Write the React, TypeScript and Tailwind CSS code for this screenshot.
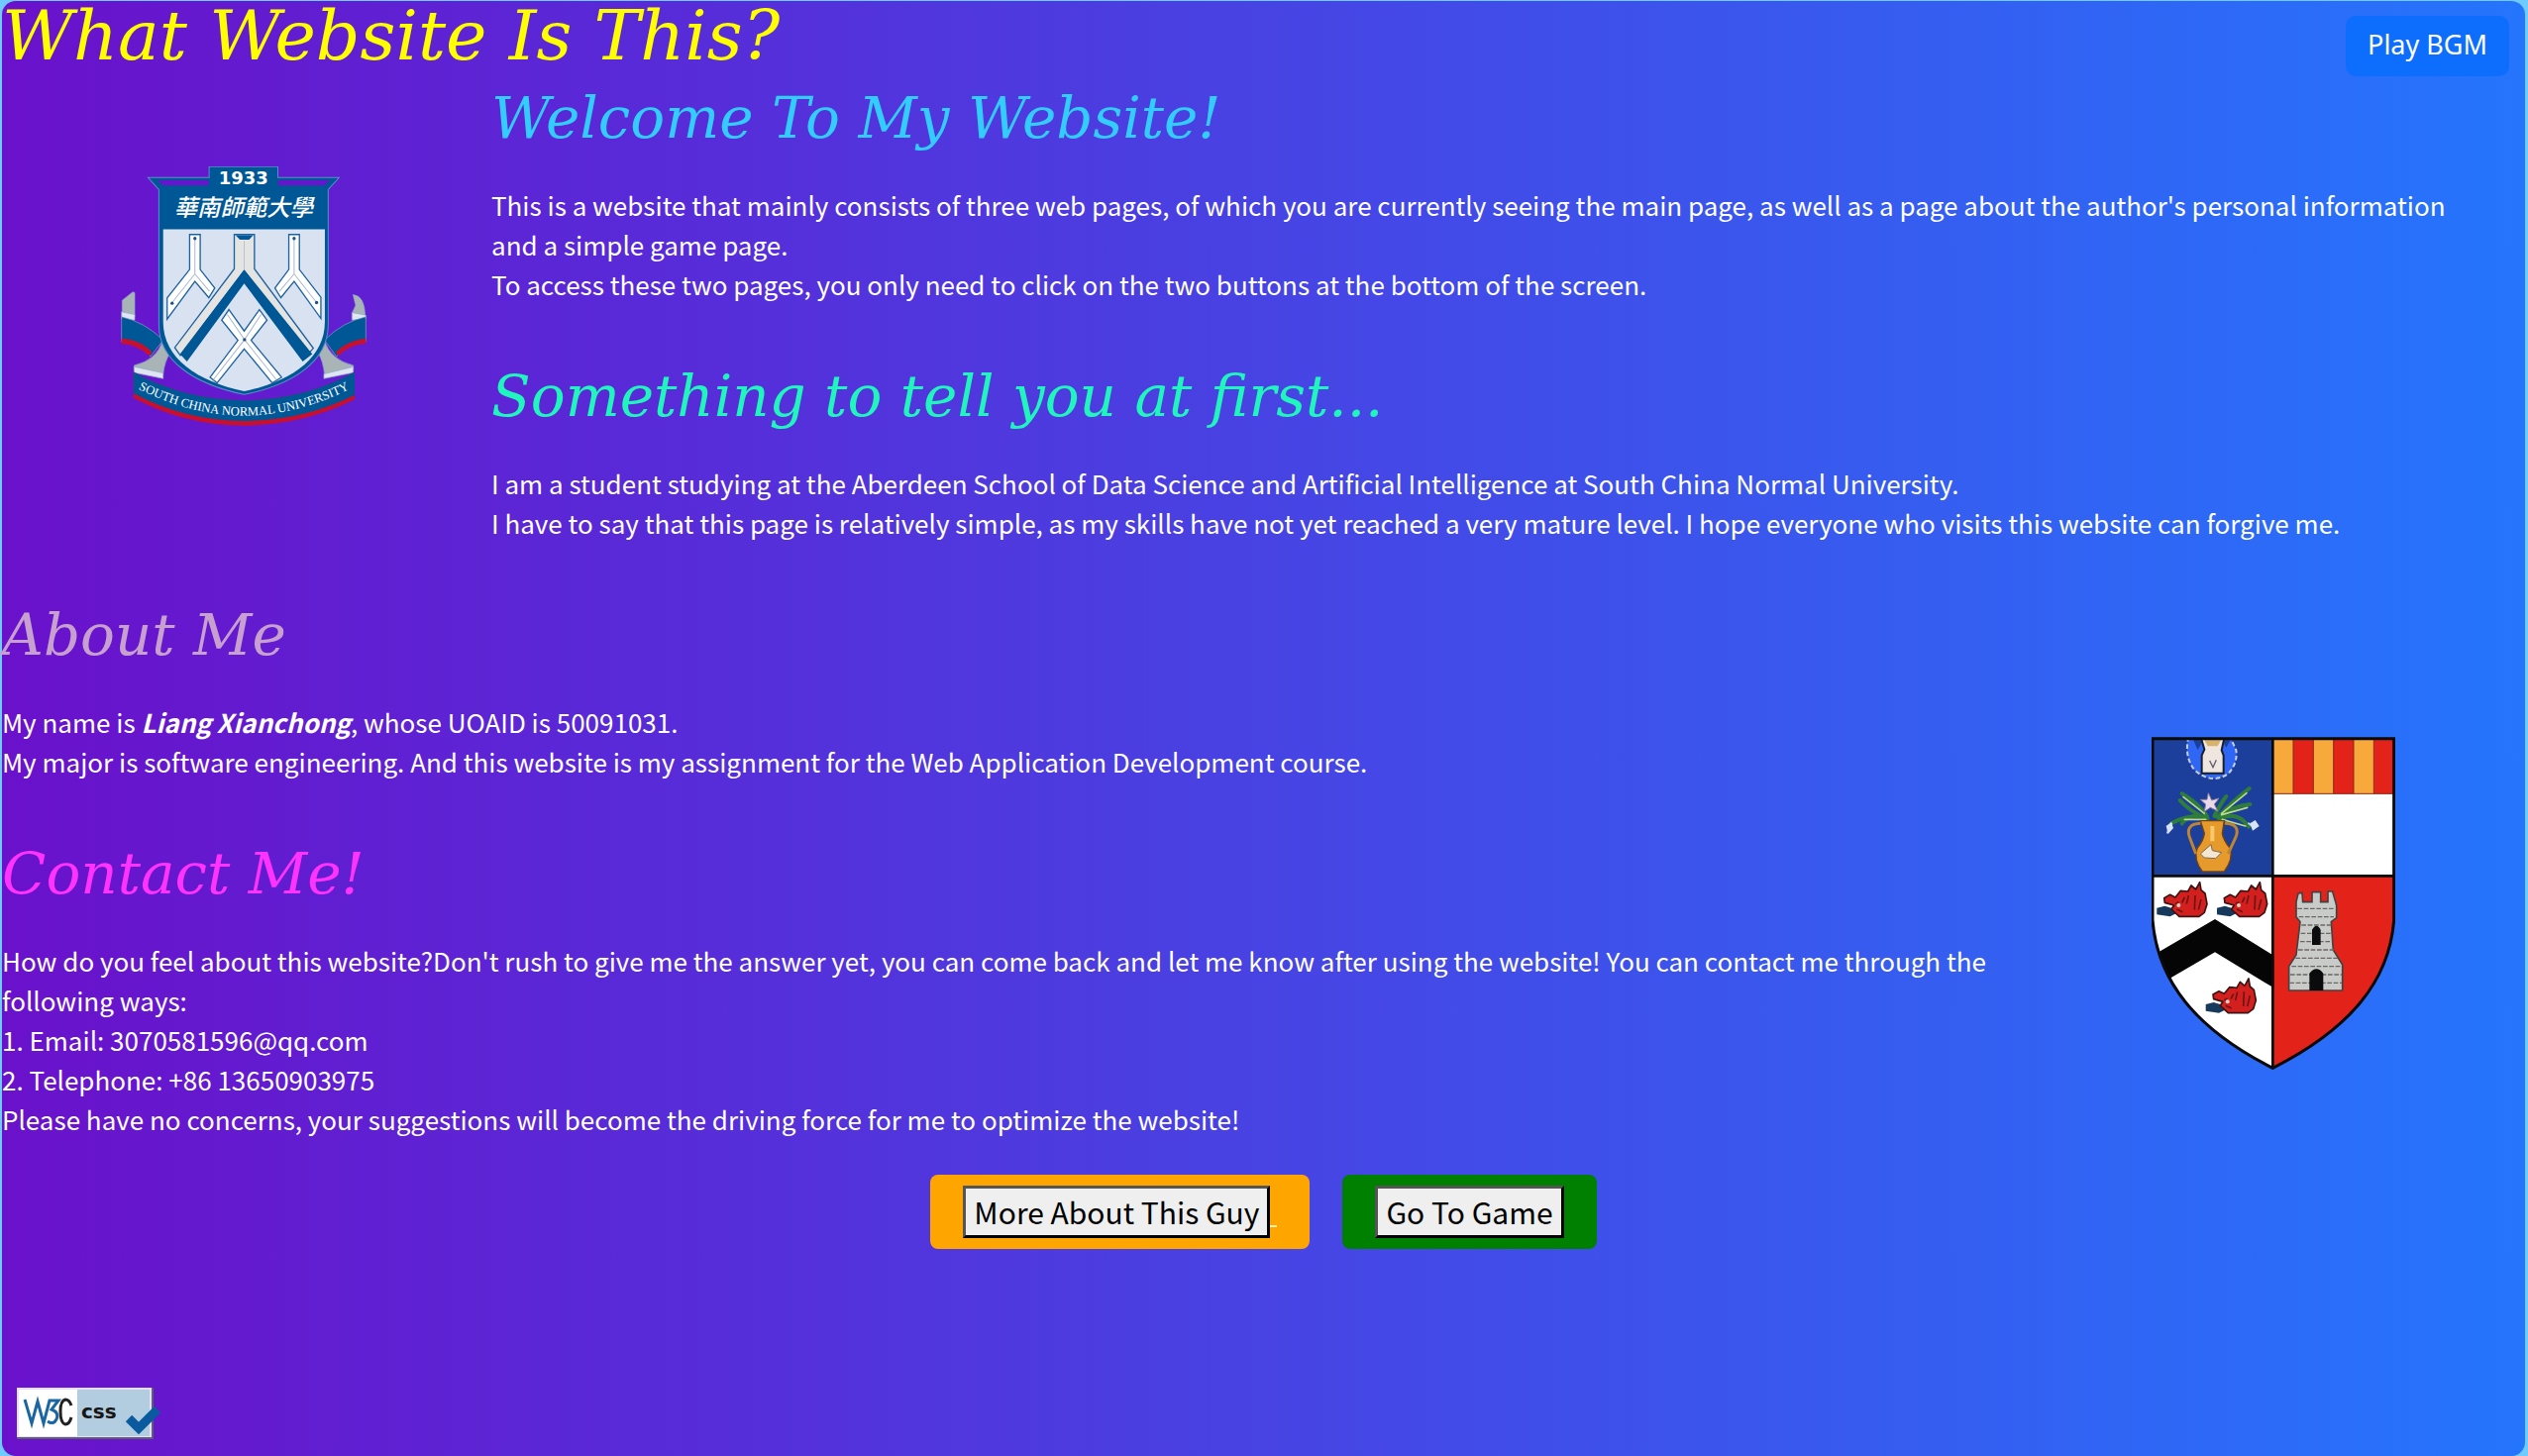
import React from "react";

function ScnuCrest() {
  return (
    <svg viewBox="0 0 743 785" className="w-[248px]" role="img" aria-label="South China Normal University crest">
      <defs>
        <path id="motto" d="M42 668 Q205 752 372 754 Q540 752 702 668" />
      </defs>
      <g stroke="#8aa4c8" strokeWidth="2">
        <path d="M4 405 L36 380 L42 382 L42 455 L4 442Z" fill="#a9b4b6" />
        <path d="M2 440 L42 448 V465 L2 462Z" fill="#dfe6f2" />
        <path d="M2 455 Q70 470 128 525 L90 575 Q50 530 2 530Z" fill="#005796" />
        <path d="M2 520 Q60 525 95 562 L86 573 Q50 538 2 536Z" fill="#c8102e" stroke="none" />
        <path d="M40 602 Q110 585 126 527 L150 562 Q132 590 128 628 L40 615Z" fill="#a9b4b6" />
        <path d="M40 606 L128 625 V642 L40 624Z" fill="#dfe6f2" />
        <path d="M702 388 Q738 390 739 455 L700 442 L710 420Z" fill="#a9b4b6" />
        <path d="M699 442 L741 450 L741 462 L699 465Z" fill="#dfe6f2" />
        <path d="M741 455 Q672 470 616 525 L652 575 Q692 535 741 530Z" fill="#005796" />
        <path d="M741 520 Q682 528 650 562 L658 573 Q692 538 741 536Z" fill="#c8102e" stroke="none" />
        <path d="M703 602 Q634 585 616 527 L596 562 Q612 590 616 630 L703 615Z" fill="#a9b4b6" />
        <path d="M703 606 L614 628 V642 L703 624Z" fill="#dfe6f2" />
      </g>
      <path d="M38 622 Q190 706 372 708 Q555 706 707 622 V705 Q555 782 372 784 Q190 782 38 700Z" fill="#c8102e" />
      <path d="M38 622 Q190 706 372 708 Q555 706 707 622 V691 Q555 768 372 770 Q190 768 38 686Z" fill="#005796" />
      <path d="M82 34 H267 V1 H475 V34 H660 L627 70 V480 C627 590 520 660 373 690 C226 660 115 590 115 480 V70Z" fill="#005796" stroke="#5b8fc8" strokeWidth="3" />
      <path d="M112 42 H266 V58 H126Z M632 42 H476 V58 H616Z" fill="#6516cc" />
      <path d="M128 190 H617 V470 C617 580 515 650 373 680 C231 650 128 580 128 470Z" fill="#d9e2f1" />
      <g stroke="#1f62a0" strokeWidth="4" fill="#e4e4e2">
        <path d="M343 206 H404 V310 L582 550 L566 568 L373 316 L180 572 L163 548 L343 310Z" />
      </g>
      <path d="M347 208 H400 L388 222 H360Z" fill="#005796" />
      <path d="M373 225 V316" stroke="#b8c4d6" strokeWidth="3" />
      <path d="M373 312 L579 568 L550 590 L373 354 L200 590 L179 568Z" fill="#005796" />
      <g stroke="#1f62a0" strokeWidth="4" fill="#ffffff">
        <path d="M208 206 H240 V312 L284 368 L266 397 L224 348 L140 462 V398 L208 312Z" />
        <path d="M508 206 H540 V312 L605 396 V460 L524 348 L484 397 L466 368 L508 312Z" />
        <path d="M327 433 L373 498 L419 433 L442 465 L394 526 L486 638 L458 655 L373 552 L291 655 L270 638 L354 526 L305 465Z" />
      </g>
      <path d="M224 218 V325 M224 325 L155 412 M224 325 L268 378 M524 218 V325 M524 325 L592 412 M524 325 L480 378 M322 448 L374 524 L470 645 M424 448 L374 524 L280 645" fill="none" stroke="#a9b8d0" strokeWidth="3" />
      <g fill="#1f4f8a">
        <circle cx="224" cy="218" r="5" /><circle cx="524" cy="218" r="5" /><circle cx="155" cy="414" r="5" /><circle cx="592" cy="412" r="5" /><circle cx="374" cy="524" r="5" />
      </g>
      <text x="371" y="53" textAnchor="middle" fontSize="54" fontWeight="700" fill="#fff" fontFamily="DejaVu Sans">1933</text>
      <text x="371" y="151" textAnchor="middle" fontSize="70" fontWeight="500" fill="#fff" fontStyle="italic" fontFamily="Noto Sans CJK TC">華南師範大學</text>
      <text fontSize="38" fill="#fff" fontFamily="Liberation Serif"><textPath href="#motto" startOffset="50%" textAnchor="middle">SOUTH CHINA NORMAL UNIVERSITY</textPath></text>
    </svg>
  );
}

function BoarHead({ x, y }: { x: number; y: number }) {
  return (
    <g transform={`translate(${x} ${y})`}>
      <path d="M0 78 L24 72 L44 78 L64 92 L40 104 L0 98Z" fill="#17395c" />
      <path d="M22 48 L40 38 L56 46 L72 26 L94 28 L104 10 L118 22 L130 0 L134 24 L146 34 L152 66 L144 92 L128 104 L68 104 L44 82 L52 70 L24 62Z" fill="#d3201f" stroke="#3c1414" strokeWidth="5" strokeLinejoin="round" />
      <path d="M56 66 L66 60 M60 82 L78 90 M96 40 L90 66 M116 40 L114 84 M134 52 L126 84 M84 46 L76 62" stroke="#6b1515" strokeWidth="5" fill="none" />
      <circle cx="66" cy="70" r="6" fill="#f0cfc4" />
    </g>
  );
}

function AberdeenCrest() {
  return (
    <svg viewBox="0 0 738 1010" className="w-[246px]" role="img" aria-label="University of Aberdeen crest">
      <defs>
        <clipPath id="shield"><path d="M3 3 H734 V555 C720 740 600 885 367 1003 C134 885 18 740 3 555Z" /></clipPath>
      </defs>
      <g clipPath="url(#shield)">
        <rect width="370" height="425" fill="#1c3f9c" />
        <rect x="368" width="370" height="425" fill="#fff" />
        <rect y="422" width="368" height="590" fill="#fff" />
        <rect x="368" y="422" width="370" height="590" fill="#e32219" />
        {[368, 490, 612].map((x) => <rect key={x} x={x} width="61" height="172" fill="#f8a93c" />)}
        {[429, 551, 673].map((x) => <rect key={x} x={x} width="61" height="172" fill="#e32219" />)}
        <path d="M429 0V172M490 0V172M551 0V172M612 0V172M673 0V172M368 172H738" stroke="#8a2a17" strokeWidth="3" />
        <path d="M112 0 Q98 60 130 100 Q180 145 232 112 Q262 78 256 40 L238 0Z" fill="#2f66f4" stroke="#c8cfe4" strokeWidth="6" strokeDasharray="14 8" />
        <path d="M124 4 L140 40 L158 6Z M212 6 L226 32 L242 4Z" fill="#1c3f9c" />
        <path d="M150 4 H220 L212 40 L218 56 V110 H152 V56 L160 38Z" fill="#efe6e0" stroke="#17202f" strokeWidth="6" />
        <path d="M158 6 H212 L200 28 H170Z" fill="#d8b26a" />
        <path d="M176 72 L186 92 L196 70" fill="none" stroke="#605a70" strokeWidth="4" />
        <g fill="none" strokeLinecap="round">
          <path d="M168 240 Q140 200 92 172 M162 246 Q110 220 86 192 M170 248 Q120 225 92 262 M200 244 Q250 190 296 156 M204 246 Q240 210 298 204 M206 248 Q260 222 294 272 M190 240 Q210 200 226 180 M150 240 Q100 238 60 262" stroke="#2f7d3a" strokeWidth="12" />
          <path d="M160 232 L96 182 M212 232 L288 170 M212 236 L290 214 M214 250 L284 270 M164 250 L100 250" stroke="#bcd98a" strokeWidth="5" />
          <path d="M60 262 L48 290 M294 262 L312 276" stroke="#b9cff0" strokeWidth="6" />
        </g>
        <path d="M172 170 L182 192 L204 186 L190 204 L200 224 L178 214 L160 226 L164 204 L148 190 L168 190Z" fill="#ead9e6" stroke="#8e7f9e" strokeWidth="3" />
        <path d="M44 270 L60 258 L66 276 L50 294Z M298 262 L314 252 L326 270 L306 284Z" fill="#d6e2f6" />
        <path d="M148 254 H220 L214 292 Q216 310 238 338 Q248 370 220 408 H154 Q126 370 138 338 Q158 312 160 292Z" fill="#e79a2c" stroke="#6e4315" strokeWidth="4" />
        <path d="M148 262 Q100 264 116 306 L134 354 M222 262 Q272 264 254 306 L232 354" fill="none" stroke="#bd8435" strokeWidth="9" />
        <path d="M148 354 L180 326 L184 344 L212 350 L194 368 L160 366Z" fill="#f3e7d4" stroke="#7a6a52" strokeWidth="3" />
        <path d="M184 270 V316" stroke="#f6ca6a" strokeWidth="12" />
        <BoarHead x={16} y={440} />
        <BoarHead x={198} y={440} />
        <BoarHead x={164} y={732} />
        <path d="M0 664 L192 552 L370 662 V760 L192 652 L40 740Z" fill="#050505" />
        <path d="M438 500 L444 474 L456 472 L458 500 H486 V470 H512 V500 H534 V468 H548 L560 510 V548 L544 560 L550 645 L578 690 V768 H416 V695 L438 660 L450 560 L438 545Z" fill="#c9cbc9" stroke="#46413f" strokeWidth="5" />
        <path d="M442 520 H556 M446 545 H552 M454 570 H544 M452 595 H546 M450 620 H548 M444 645 H552 M436 670 H564 M424 695 H574 M420 720 H576 M418 745 H576" stroke="#6b6765" strokeWidth="4" strokeDasharray="14 5" />
        <path d="M486 630 V584 Q500 560 512 584 V630Z M478 768 V716 Q500 690 520 716 V768Z" fill="#0b0b0d" />
        <path d="M0 421 H738 M367 0 V1010" stroke="#0a0a0a" strokeWidth="8" />
      </g>
      <path d="M3 5 H734 V555 C720 740 600 885 367 1003 C134 885 18 740 3 555Z" fill="none" stroke="#0a0a0a" strokeWidth="9" />
    </svg>
  );
}

function CssBadge() {
  return (
    <svg viewBox="0 0 146 52" className="w-[146px]" role="img" aria-label="W3C valid CSS">
      <rect width="138" height="52" fill="#5d5c74" />
      <rect width="136" height="50" fill="#e4e1f2" />
      <rect x="2" y="2" width="59" height="47" fill="#fff" />
      <rect x="61" y="2" width="73" height="47" fill="#b3cde0" />
      <path d="M8 12 L15 36 L21 14 L27 36 L33 13 H42 L35 22 Q43 25 40 32 Q37 38 31 34" fill="none" stroke="#1a66a3" strokeWidth="3" />
      <path d="M55 18 Q53 12 49 12 Q44 13 44 24 Q44 36 49 37 Q53 37 55 30" fill="none" stroke="#222" strokeWidth="3" />
      <text x="65" y="31" fontSize="20" fontWeight="700" fill="#161616" fontFamily="DejaVu Sans">css</text>
      <path d="M113 31 L123 41 L142 22" fill="none" stroke="#0a5a9f" strokeWidth="9" />
    </svg>
  );
}

const script = "font-['Lucida_Handwriting','DejaVu_Serif',cursive] italic font-normal whitespace-nowrap";
const linkButton =
  "h-[53px] px-2 bg-[#efefef] text-black border-[3px] border-t-[#555] border-l-[#555] border-b-black border-r-black leading-[47px]";

export default function App() {
  return (
    <div className="min-h-screen bg-[#6fcbff] pt-px pl-0.5 pr-[3px] flex flex-col">
      <div className="relative grow flex flex-col rounded-[14px] bg-[linear-gradient(to_right,#6a11cb,#2575fc)] text-white font-['Noto_Sans_CJK_SC',sans-serif] text-[26px] leading-10">
        <button className="absolute top-[15px] right-4 h-[61px] px-[22px] pb-1 rounded-[10px] bg-[#0d6efd] font-['Noto_Sans',sans-serif] text-[27px]">Play BGM</button>
        <h1 className={`${script} text-[#ffff00] text-[70px] leading-[70px]`}>What Website Is This?</h1>
        <section className="flex">
          <div className="w-[494px] shrink-0 flex justify-center pt-[97px] pr-1.5"><div><ScnuCrest /></div></div>
          <div className="grow pr-10">
            <h2 className={`${script} text-[#33ccff] text-[58px] leading-[96px]`}>Welcome To My Website!</h2>
            <p className="mt-5">This is a website that mainly consists of three web pages, of which you are currently seeing the main page, as well as a page about the author's personal information and a simple game page.<br />To access these two pages, you only need to click on the two buttons at the bottom of the screen.</p>
            <h2 className={`${script} text-[#20f5bd] text-[58px] leading-[96px] mt-[45px]`}>Something to tell you at first...</h2>
            <p className="mt-5">I am a student studying at the Aberdeen School of Data Science and Artificial Intelligence at South China Normal University.<br />I have to say that this page is relatively simple, as my skills have not yet reached a very mature level. I hope everyone who visits this website can forgive me.</p>
          </div>
        </section>
        <section className="flex">
          <div className="grow">
            <h2 className={`${script} text-[#c8a0d0] text-[58px] leading-[96px] mt-[45px]`}>About Me</h2>
            <p className="mt-5">My name is <strong><em>Liang Xianchong</em></strong>, whose UOAID is 50091031.<br />My major is software engineering. And this website is my assignment for the Web Application Development course.</p>
            <h2 className={`${script} text-[#ff33ff] text-[58px] leading-[96px] mt-[45px]`}>Contact Me!</h2>
            <p className="mt-5">How do you feel about this website?Don't rush to give me the answer yet, you can come back and let me know after using the website! You can contact me through the following ways:<br />1. Email: 3070581596@qq.com<br />2. Telephone: +86 13650903975<br />Please have no concerns, your suggestions will become the driving force for me to optimize the website!</p>
          </div>
          <div className="w-[508px] shrink-0 flex justify-center pt-[196px]"><div><AberdeenCrest /></div></div>
        </section>
        <nav className="flex justify-center gap-[33px] mt-9 text-[30px]">
          <div className="rounded-lg bg-[#ffa500] px-[33px] py-[11px] flex items-end">
            <button className={linkButton}>More About This Guy</button>
            <span className="w-[7px] h-0.5 mb-[11px] bg-[#ffeeb0]" />
          </div>
          <div className="rounded-lg bg-[#008000] px-[33px] py-[11px] flex">
            <button className={linkButton}>Go To Game</button>
          </div>
        </nav>
        <a href="#css" className="mt-auto ml-[15px] mb-[17px] self-start"><CssBadge /></a>
      </div>
    </div>
  );
}
